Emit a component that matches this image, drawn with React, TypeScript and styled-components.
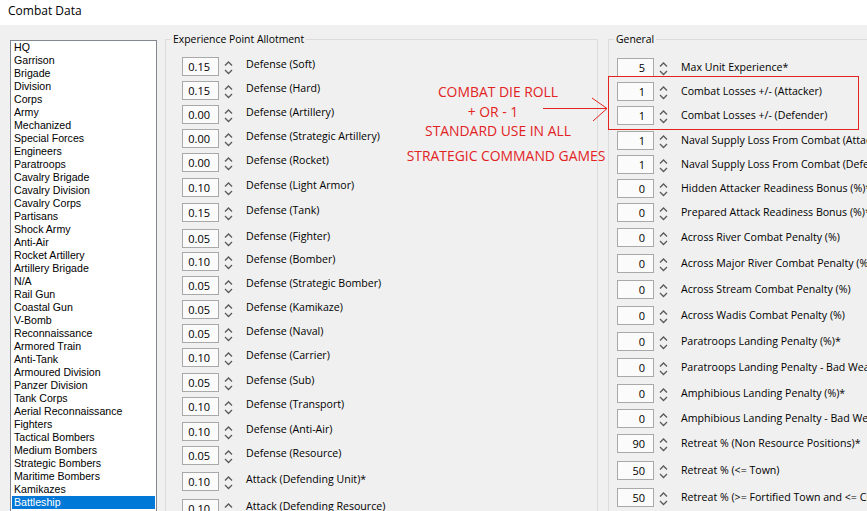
import React from 'react';
import styled, { createGlobalStyle } from 'styled-components';

const GlobalStyle = createGlobalStyle`
  html, body {
    margin: 0;
    padding: 0;
    background: #f0f0f0;
    overflow: hidden;
  }
  body {
    font-family: "Open Sans", "Liberation Sans", sans-serif;
    color: #000;
  }
`;

const Page = styled.div`
  position: relative;
  width: 867px;
  height: 511px;
  overflow: hidden;
  background: #f0f0f0;
`;

const TitleBar = styled.div`
  height: 25px;
  background: #fff;
  display: flex;
  align-items: center;
  padding: 0 0 4px 8px;
  box-sizing: border-box;
  font-size: 12px;
`;

const Main = styled.div`
  display: flex;
  align-items: flex-start;
  padding: 14px 0 0 10px;
`;

const ListBox = styled.div`
  margin-top: 1px;
  width: 147px;
  height: 500px;
  box-sizing: border-box;
  background: #fff;
  border: 1px solid #828790;
  padding: 0 1px;
  font-family: "Liberation Sans", Arial, sans-serif;
  font-size: 10.6px;
  flex-shrink: 0;
`;

const ListItem = styled.div<{ $selected?: boolean }>`
  height: 13px;
  line-height: 13px;
  padding-left: 2px;
  white-space: nowrap;
  background: ${p => (p.$selected ? '#0078d7' : 'transparent')};
  color: ${p => (p.$selected ? '#fff' : '#000')};
`;

const GroupBox = styled.div<{ $width: number; $left: number; $padLeft: number; $padTop: number }>`
  position: relative;
  flex-shrink: 0;
  width: ${p => p.$width}px;
  margin-left: ${p => p.$left}px;
  height: 520px;
  box-sizing: border-box;
  border: 1px solid #dcdcdc;
  padding: ${p => p.$padTop}px 0 0 ${p => p.$padLeft}px;
  display: flex;
  flex-direction: column;
`;

const Legend = styled.span`
  position: absolute;
  top: -9px;
  left: 5px;
  padding: 0 2px;
  background: #f0f0f0;
  font-size: 10.4px;
  line-height: 16px;
  white-space: nowrap;
`;

const Row = styled.div<{ $gapAbove: number }>`
  display: flex;
  align-items: flex-start;
  height: 19px;
  margin-top: ${p => p.$gapAbove}px;
  white-space: nowrap;
  flex-shrink: 0;
`;

const SpinInput = styled.div`
  width: 37px;
  height: 19px;
  box-sizing: border-box;
  border: 1px solid #a9a9a9;
  background: #fbfbfb;
  font-size: 11px;
  line-height: 17px;
  text-align: right;
  padding-right: 8px;
  flex-shrink: 0;
`;

const SpinArrows = styled.svg`
  flex-shrink: 0;
  margin: 0 0 0 5px;
`;

const RowLabel = styled.span<{ $lift: number }>`
  margin-left: 13px;
  margin-top: ${p => -p.$lift}px;
  font-size: 10.6px;
  line-height: 19px;
`;

const Annotation = styled.div`
  position: absolute;
  left: 398px;
  top: 82px;
  width: 200px;
  display: flex;
  flex-direction: column;
  align-items: center;
  color: #e2231f;
  font-size: 13.9px;
  white-space: nowrap;
`;

const NoteLine = styled.div<{ $shift: number; $gapAbove?: number }>`
  line-height: 19.7px;
  margin-top: ${p => p.$gapAbove || 0}px;
  transform: translateX(${p => p.$shift}px);
`;

const Overlay = styled.svg`
  position: absolute;
  left: 0;
  top: 0;
  pointer-events: none;
`;

const units = [
  'HQ', 'Garrison', 'Brigade', 'Division', 'Corps', 'Army', 'Mechanized', 'Special Forces',
  'Engineers', 'Paratroops', 'Cavalry Brigade', 'Cavalry Division', 'Cavalry Corps', 'Partisans',
  'Shock Army', 'Anti-Air', 'Rocket Artillery', 'Artillery Brigade', 'N/A', 'Rail Gun',
  'Coastal Gun', 'V-Bomb', 'Reconnaissance', 'Armored Train', 'Anti-Tank', 'Armoured Division',
  'Panzer Division', 'Tank Corps', 'Aerial Reconnaissance', 'Fighters', 'Tactical Bombers',
  'Medium Bombers', 'Strategic Bombers', 'Maritime Bombers', 'Kamikazes', 'Battleship',
];

// [value, label, distance from the row above]
const experience: [string, string, number][] = [
  ['0.15', 'Defense (Soft)', 0],
  ['0.15', 'Defense (Hard)', 24],
  ['0.00', 'Defense (Artillery)', 24],
  ['0.00', 'Defense (Strategic Artillery)', 24],
  ['0.00', 'Defense (Rocket)', 24],
  ['0.10', 'Defense (Light Armor)', 25],
  ['0.15', 'Defense (Tank)', 25],
  ['0.05', 'Defense (Fighter)', 25.5],
  ['0.10', 'Defense (Bomber)', 23.5],
  ['0.05', 'Defense (Strategic Bomber)', 24],
  ['0.05', 'Defense (Kamikaze)', 24],
  ['0.05', 'Defense (Naval)', 24],
  ['0.10', 'Defense (Carrier)', 24],
  ['0.05', 'Defense (Sub)', 25],
  ['0.10', 'Defense (Transport)', 24],
  ['0.10', 'Defense (Anti-Air)', 25],
  ['0.05', 'Defense (Resource)', 24],
  ['0.10', 'Attack (Defending Unit)*', 26],
  ['0.10', 'Attack (Defending Resource)', 27],
];

const general: [string, string, number][] = [
  ['5', 'Max Unit Experience*', 0],
  ['1', 'Combat Losses +/- (Attacker)', 24],
  ['1', 'Combat Losses +/- (Defender)', 24],
  ['1', 'Naval Supply Loss From Combat (Attacker)', 25],
  ['1', 'Naval Supply Loss From Combat (Defender)', 24],
  ['0', 'Hidden Attacker Readiness Bonus (%)*', 24],
  ['0', 'Prepared Attack Readiness Bonus (%)*', 24],
  ['0', 'Across River Combat Penalty (%)', 25],
  ['0', 'Across Major River Combat Penalty (%)', 26],
  ['0', 'Across Stream Combat Penalty (%)', 26],
  ['0', 'Across Wadis Combat Penalty (%)', 26],
  ['0', 'Paratroops Landing Penalty (%)*', 26],
  ['0', 'Paratroops Landing Penalty - Bad Weather (%)*', 26],
  ['0', 'Amphibious Landing Penalty (%)*', 26],
  ['0', 'Amphibious Landing Penalty - Bad Weather (%)*', 25],
  ['90', 'Retreat % (Non Resource Positions)*', 25],
  ['50', 'Retreat % (<= Town)', 27],
  ['50', 'Retreat % (>= Fortified Town and <= City)', 27],
];

const Arrows = () => (
  <SpinArrows width="9" height="19" viewBox="0 0 9 19">
    <polyline points="1,8.5 4.5,5 8,8.5" fill="none" stroke="#5a5a5a" strokeWidth="1.3" />
    <polyline points="1,13 4.5,16.5 8,13" fill="none" stroke="#5a5a5a" strokeWidth="1.3" />
  </SpinArrows>
);

const SpinRow: React.FC<{ value: string; label: string; lift: number; step: number }> = ({ value, label, lift, step }) => (
  <Row $gapAbove={step > 0 ? step - 19 : 0}>
    <SpinInput>{value}</SpinInput>
    <Arrows />
    <RowLabel $lift={lift}>{label}</RowLabel>
  </Row>
);

export default function App() {
  return (
    <Page>
      <GlobalStyle />
      <TitleBar>Combat Data</TitleBar>
      <Main>
        <ListBox>
          {units.map(u => (
            <ListItem key={u} $selected={u === 'Battleship'}>{u}</ListItem>
          ))}
        </ListBox>

        <GroupBox $width={433} $left={8} $padLeft={16} $padTop={17}>
          <Legend>Experience Point Allotment</Legend>
          {experience.map(([v, l, s]) => (
            <SpinRow key={l} value={v} label={l} lift={2} step={s} />
          ))}
        </GroupBox>

        <GroupBox $width={300} $left={10} $padLeft={8} $padTop={18}>
          <Legend>General</Legend>
          {general.map(([v, l, s]) => (
            <SpinRow key={l} value={v} label={l} lift={0} step={s} />
          ))}
        </GroupBox>
      </Main>

      <Annotation>
        <NoteLine $shift={0}>COMBAT DIE ROLL</NoteLine>
        <NoteLine $shift={-5}>+ OR - 1</NoteLine>
        <NoteLine $shift={0}>STANDARD USE IN ALL</NoteLine>
        <NoteLine $shift={8} $gapAbove={5}>STRATEGIC COMMAND GAMES</NoteLine>
      </Annotation>

      <Overlay width="867" height="511" viewBox="0 0 867 511">
        <rect x="608.5" y="76.5" width="250" height="53" fill="none" stroke="#e2231f" strokeWidth="1" />
        <line x1="543" y1="108.5" x2="607" y2="108.5" stroke="#e2231f" strokeWidth="1" />
        <polyline points="592,98 607,108.5 593,121" fill="none" stroke="#e2231f" strokeWidth="1" />
      </Overlay>
    </Page>
  );
}
